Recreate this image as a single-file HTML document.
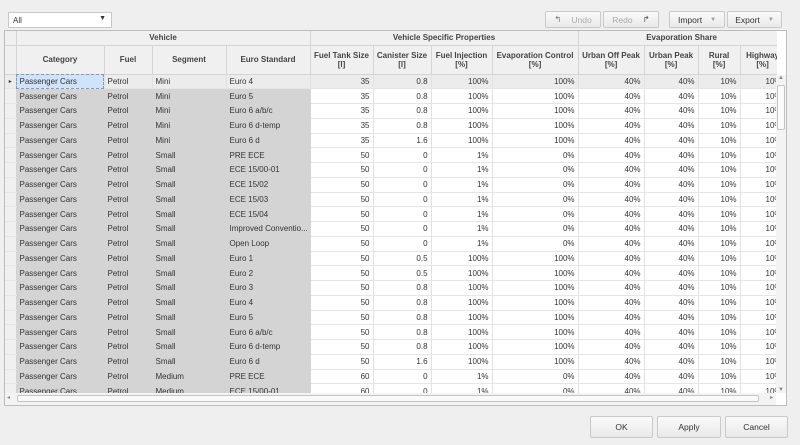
<!DOCTYPE html>
<html><head><style>
*{box-sizing:border-box;margin:0;padding:0}
body{width:800px;height:445px;background:#efefef;font-family:"Liberation Sans",sans-serif;font-size:8px;color:#333;position:relative;overflow:hidden}
.btn{position:absolute;border:1px solid #c9c9c9;background:linear-gradient(#fafafa,#e9e9e9);font-size:8.5px;color:#333;display:flex;align-items:center;justify-content:center;border-radius:2px}
.combo{position:absolute;left:8px;top:12px;width:104px;height:16px;background:#fff;border:1px solid #c8c8c8;padding:3px 4px;font-size:8px}
.frame{position:absolute;left:4px;top:30px;width:783px;height:376px;border:1px solid #bdbdbd;background:#fff}
.grid{position:absolute;left:0;top:0;width:772px;height:362px;overflow:hidden}
table{border-collapse:collapse;table-layout:fixed;width:780px}
td,th{white-space:nowrap;overflow:hidden;height:14.75px;padding:0 3px;border-right:1px solid #e2e2e2;border-bottom:1px solid #e6e6e6;font-weight:normal}
th{background:#f0f0f0;font-weight:bold;color:#444;border-right:1px solid #d4d4d4;border-bottom:1px solid #d4d4d4;text-align:center;line-height:9px;padding:0 1px}
tr.h1 th{height:14px}
tr.h2 th{height:29px}
td.g{background:#d4d4d4;border-right-color:#d4d4d4;border-bottom-color:#d4d4d4}
td.i{background:#f0f0f0;border-right:1px solid #d4d4d4;padding:0}
td.r{text-align:right}
tr.f td{background:#ececec}
tr.f td.sel{background:#cfe3fb;outline:1px dashed #7a9ccc;outline-offset:-1px}
.vs{position:absolute;left:771px;top:44px;width:10px;height:318px;background:#f3f3f3}
.hs{position:absolute;left:0;top:362px;width:771px;height:12px;background:#f3f3f3}
</style></head><body>
<div class="combo">All<span style="position:absolute;right:5px;top:2px;font-size:7px">▼</span></div>
<div class="btn" style="left:545px;top:11px;width:56px;height:17px;color:#aaa"><span style="color:#777;margin-right:10px">↰</span>Undo</div>
<div class="btn" style="left:603px;top:11px;width:56px;height:17px;color:#aaa">Redo<span style="color:#555;margin-left:10px">↱</span></div>
<div class="btn" style="left:669px;top:11px;width:56px;height:17px">Import <span style="font-size:6px;color:#999;margin-left:8px">▼</span></div>
<div class="btn" style="left:727px;top:11px;width:55px;height:17px">Export <span style="font-size:6px;color:#999;margin-left:8px">▼</span></div>
<div class="frame"><div class="grid"><table>
<colgroup><col style="width:11px"><col style="width:88px"><col style="width:48px"><col style="width:74px"><col style="width:84px"><col style="width:63px"><col style="width:58px"><col style="width:61px"><col style="width:86px"><col style="width:66px"><col style="width:54px"><col style="width:42px"><col style="width:45px"></colgroup>
<tr class="h1"><th></th><th colspan="4">Vehicle</th><th colspan="4">Vehicle Specific Properties</th><th colspan="4">Evaporation Share</th></tr>
<tr class="h2"><th></th><th>Category</th><th>Fuel</th><th>Segment</th><th>Euro Standard</th><th>Fuel Tank Size<br>[l]</th><th>Canister Size<br>[l]</th><th>Fuel Injection<br>[%]</th><th>Evaporation Control<br>[%]</th><th>Urban Off Peak<br>[%]</th><th>Urban Peak<br>[%]</th><th>Rural<br>[%]</th><th>Highway<br>[%]</th></tr>
<tr class="f"><td class="i" style="font-size:6px;text-align:center">▸</td><td class="sel">Passenger Cars</td><td>Petrol</td><td>Mini</td><td>Euro 4</td><td class="r">35</td><td class="r">0.8</td><td class="r">100%</td><td class="r">100%</td><td class="r">40%</td><td class="r">40%</td><td class="r">10%</td><td class="r">10%</td></tr>
<tr><td class="i"></td><td class="g">Passenger Cars</td><td class="g">Petrol</td><td class="g">Mini</td><td class="g">Euro 5</td><td class="r">35</td><td class="r">0.8</td><td class="r">100%</td><td class="r">100%</td><td class="r">40%</td><td class="r">40%</td><td class="r">10%</td><td class="r">10%</td></tr>
<tr><td class="i"></td><td class="g">Passenger Cars</td><td class="g">Petrol</td><td class="g">Mini</td><td class="g">Euro 6 a/b/c</td><td class="r">35</td><td class="r">0.8</td><td class="r">100%</td><td class="r">100%</td><td class="r">40%</td><td class="r">40%</td><td class="r">10%</td><td class="r">10%</td></tr>
<tr><td class="i"></td><td class="g">Passenger Cars</td><td class="g">Petrol</td><td class="g">Mini</td><td class="g">Euro 6 d-temp</td><td class="r">35</td><td class="r">0.8</td><td class="r">100%</td><td class="r">100%</td><td class="r">40%</td><td class="r">40%</td><td class="r">10%</td><td class="r">10%</td></tr>
<tr><td class="i"></td><td class="g">Passenger Cars</td><td class="g">Petrol</td><td class="g">Mini</td><td class="g">Euro 6 d</td><td class="r">35</td><td class="r">1.6</td><td class="r">100%</td><td class="r">100%</td><td class="r">40%</td><td class="r">40%</td><td class="r">10%</td><td class="r">10%</td></tr>
<tr><td class="i"></td><td class="g">Passenger Cars</td><td class="g">Petrol</td><td class="g">Small</td><td class="g">PRE ECE</td><td class="r">50</td><td class="r">0</td><td class="r">1%</td><td class="r">0%</td><td class="r">40%</td><td class="r">40%</td><td class="r">10%</td><td class="r">10%</td></tr>
<tr><td class="i"></td><td class="g">Passenger Cars</td><td class="g">Petrol</td><td class="g">Small</td><td class="g">ECE 15/00-01</td><td class="r">50</td><td class="r">0</td><td class="r">1%</td><td class="r">0%</td><td class="r">40%</td><td class="r">40%</td><td class="r">10%</td><td class="r">10%</td></tr>
<tr><td class="i"></td><td class="g">Passenger Cars</td><td class="g">Petrol</td><td class="g">Small</td><td class="g">ECE 15/02</td><td class="r">50</td><td class="r">0</td><td class="r">1%</td><td class="r">0%</td><td class="r">40%</td><td class="r">40%</td><td class="r">10%</td><td class="r">10%</td></tr>
<tr><td class="i"></td><td class="g">Passenger Cars</td><td class="g">Petrol</td><td class="g">Small</td><td class="g">ECE 15/03</td><td class="r">50</td><td class="r">0</td><td class="r">1%</td><td class="r">0%</td><td class="r">40%</td><td class="r">40%</td><td class="r">10%</td><td class="r">10%</td></tr>
<tr><td class="i"></td><td class="g">Passenger Cars</td><td class="g">Petrol</td><td class="g">Small</td><td class="g">ECE 15/04</td><td class="r">50</td><td class="r">0</td><td class="r">1%</td><td class="r">0%</td><td class="r">40%</td><td class="r">40%</td><td class="r">10%</td><td class="r">10%</td></tr>
<tr><td class="i"></td><td class="g">Passenger Cars</td><td class="g">Petrol</td><td class="g">Small</td><td class="g">Improved Conventio...</td><td class="r">50</td><td class="r">0</td><td class="r">1%</td><td class="r">0%</td><td class="r">40%</td><td class="r">40%</td><td class="r">10%</td><td class="r">10%</td></tr>
<tr><td class="i"></td><td class="g">Passenger Cars</td><td class="g">Petrol</td><td class="g">Small</td><td class="g">Open Loop</td><td class="r">50</td><td class="r">0</td><td class="r">1%</td><td class="r">0%</td><td class="r">40%</td><td class="r">40%</td><td class="r">10%</td><td class="r">10%</td></tr>
<tr><td class="i"></td><td class="g">Passenger Cars</td><td class="g">Petrol</td><td class="g">Small</td><td class="g">Euro 1</td><td class="r">50</td><td class="r">0.5</td><td class="r">100%</td><td class="r">100%</td><td class="r">40%</td><td class="r">40%</td><td class="r">10%</td><td class="r">10%</td></tr>
<tr><td class="i"></td><td class="g">Passenger Cars</td><td class="g">Petrol</td><td class="g">Small</td><td class="g">Euro 2</td><td class="r">50</td><td class="r">0.5</td><td class="r">100%</td><td class="r">100%</td><td class="r">40%</td><td class="r">40%</td><td class="r">10%</td><td class="r">10%</td></tr>
<tr><td class="i"></td><td class="g">Passenger Cars</td><td class="g">Petrol</td><td class="g">Small</td><td class="g">Euro 3</td><td class="r">50</td><td class="r">0.8</td><td class="r">100%</td><td class="r">100%</td><td class="r">40%</td><td class="r">40%</td><td class="r">10%</td><td class="r">10%</td></tr>
<tr><td class="i"></td><td class="g">Passenger Cars</td><td class="g">Petrol</td><td class="g">Small</td><td class="g">Euro 4</td><td class="r">50</td><td class="r">0.8</td><td class="r">100%</td><td class="r">100%</td><td class="r">40%</td><td class="r">40%</td><td class="r">10%</td><td class="r">10%</td></tr>
<tr><td class="i"></td><td class="g">Passenger Cars</td><td class="g">Petrol</td><td class="g">Small</td><td class="g">Euro 5</td><td class="r">50</td><td class="r">0.8</td><td class="r">100%</td><td class="r">100%</td><td class="r">40%</td><td class="r">40%</td><td class="r">10%</td><td class="r">10%</td></tr>
<tr><td class="i"></td><td class="g">Passenger Cars</td><td class="g">Petrol</td><td class="g">Small</td><td class="g">Euro 6 a/b/c</td><td class="r">50</td><td class="r">0.8</td><td class="r">100%</td><td class="r">100%</td><td class="r">40%</td><td class="r">40%</td><td class="r">10%</td><td class="r">10%</td></tr>
<tr><td class="i"></td><td class="g">Passenger Cars</td><td class="g">Petrol</td><td class="g">Small</td><td class="g">Euro 6 d-temp</td><td class="r">50</td><td class="r">0.8</td><td class="r">100%</td><td class="r">100%</td><td class="r">40%</td><td class="r">40%</td><td class="r">10%</td><td class="r">10%</td></tr>
<tr><td class="i"></td><td class="g">Passenger Cars</td><td class="g">Petrol</td><td class="g">Small</td><td class="g">Euro 6 d</td><td class="r">50</td><td class="r">1.6</td><td class="r">100%</td><td class="r">100%</td><td class="r">40%</td><td class="r">40%</td><td class="r">10%</td><td class="r">10%</td></tr>
<tr><td class="i"></td><td class="g">Passenger Cars</td><td class="g">Petrol</td><td class="g">Medium</td><td class="g">PRE ECE</td><td class="r">60</td><td class="r">0</td><td class="r">1%</td><td class="r">0%</td><td class="r">40%</td><td class="r">40%</td><td class="r">10%</td><td class="r">10%</td></tr>
<tr><td class="i"></td><td class="g">Passenger Cars</td><td class="g">Petrol</td><td class="g">Medium</td><td class="g">ECE 15/00-01</td><td class="r">60</td><td class="r">0</td><td class="r">1%</td><td class="r">0%</td><td class="r">40%</td><td class="r">40%</td><td class="r">10%</td><td class="r">10%</td></tr>
</table></div>
<div class="vs"><div style="position:absolute;left:2px;top:0;font-size:6px;color:#888">▲</div><div style="position:absolute;left:1px;top:10px;width:8px;height:45px;border:1px solid #c4c4c4;background:#fafafa;border-radius:2px"></div><div style="position:absolute;left:2px;bottom:0;font-size:6px;color:#888">▼</div></div>
<div class="hs"><div style="position:absolute;left:2px;top:1px;font-size:6px;color:#888">◂</div><div style="position:absolute;left:12px;top:2px;width:742px;height:7px;border:1px solid #c4c4c4;background:#fafafa;border-radius:2px"></div><div style="position:absolute;right:3px;top:1px;font-size:6px;color:#888">▸</div></div>
</div>
<div class="btn" style="left:590px;top:416px;width:63px;height:22px">OK</div>
<div class="btn" style="left:657px;top:416px;width:64px;height:22px">Apply</div>
<div class="btn" style="left:725px;top:416px;width:63px;height:22px">Cancel</div>
</body></html>
